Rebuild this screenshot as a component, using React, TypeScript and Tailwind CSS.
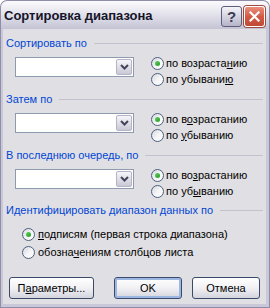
import React from "react";

const font = { fontFamily: '"Liberation Sans", Arial, sans-serif' };

function Radio({ checked }: { checked?: boolean }) {
  return (
    <span className="relative inline-flex w-[13px] h-[13px] shrink-0 rounded-full border border-[#4d5f80] bg-gradient-to-br from-[#d6d6de] via-[#f4f4f6] to-white items-center justify-center">
      {checked && (
        <span className="w-[5px] h-[5px] rounded-full bg-gradient-to-br from-[#5fd35f] to-[#1a9a1a]" />
      )}
    </span>
  );
}

function Combo() {
  return (
    <div className="w-[119px] h-[20px] border border-[#8e9aae] bg-white flex justify-end p-[1px]">
      <div className="w-[16px] h-full rounded-[2px] border border-[#b4b4c4] bg-gradient-to-b from-[#f6f6fa] to-[#c9c9d6] flex items-center justify-center">
        <svg width="9" height="6" viewBox="0 0 9 6">
          <polyline points="1,1 4.5,4.5 8,1" fill="none" stroke="#44445a" strokeWidth="2" />
        </svg>
      </div>
    </div>
  );
}

function Label({ text }: { text: string }) {
  return (
    <div className="flex items-center h-[13px] pl-[3px] pr-[3px]">
      <span className="text-[#0046d5] whitespace-nowrap">{text}</span>
      <div className="flex-1 ml-[7px] h-px bg-[#c3c2ce]" />
    </div>
  );
}

function SortGroup({
  label,
  up,
  down,
  mt,
}: {
  label: string;
  up: React.ReactNode;
  down: React.ReactNode;
  mt: string;
}) {
  return (
    <div className={mt}>
      <Label text={label} />
      <div className="flex mt-[5px] pl-[12px]">
        <div className="pt-[2px]">
          <Combo />
        </div>
        <div className="ml-[17px] flex flex-col">
          <div className="h-[16px] flex items-center gap-[2px]">
            <Radio checked />
            <span>{up}</span>
          </div>
          <div className="h-[16px] flex items-center gap-[2px]">
            <Radio />
            <span>{down}</span>
          </div>
        </div>
      </div>
    </div>
  );
}

function Btn({ children, def, cls }: { children: React.ReactNode; def?: boolean; cls: string }) {
  return (
    <div
      className={
        "h-[22px] rounded-[3px] border border-[#3b4a68] bg-gradient-to-b from-white via-[#f1f1f4] to-[#d4d4de] flex items-center justify-center " +
        cls +
        (def ? " shadow-[inset_0_0_0_2px_#9db7e4]" : "")
      }
    >
      {children}
    </div>
  );
}

export default function App() {
  return (
    <div style={font} className="w-[270px] h-[308px] text-[11px] text-black leading-[13px] flex flex-col">
      {/* title bar */}
      <div className="h-[29px] rounded-t-[7px] border border-b-0 border-[#8f8ea8] bg-gradient-to-b from-[#fbfbfd] via-[#e2e1ea] to-[#c4c3d4] flex items-center pl-[3px] pr-[4px]">
        <span className="font-bold text-[13px] text-[#15152a] flex-1">Сортировка диапазона</span>
        <div className="flex gap-[2px] mt-[2px]">
          <div className="w-[21px] h-[21px] rounded-[3px] border border-[#5d5d7c] bg-gradient-to-b from-[#f4f4f8] to-[#b5b4c9] flex items-center justify-center font-bold text-[15px] text-[#3a3a55]">
            ?
          </div>
          <div className="w-[21px] h-[21px] rounded-[3px] border border-white bg-gradient-to-b from-[#e8907c] via-[#d35a45] to-[#c04a35] flex items-center justify-center shadow-[0_0_0_1px_#a14a44]">
            <svg width="11" height="11" viewBox="0 0 11 11">
              <path d="M1.5 1.5 L9.5 9.5 M9.5 1.5 L1.5 9.5" stroke="white" strokeWidth="2.2" strokeLinecap="square" />
            </svg>
          </div>
        </div>
      </div>

      {/* body */}
      <div className="flex-1 border-x border-b border-[#8f8ea8] bg-[#c9c8d8] pl-[2px] pr-[3px] pb-[3px] flex">
        <div className="flex-1 bg-[#e0dfe3] pt-[8px] flex flex-col">
          <SortGroup
            mt=""
            label="Сортировать по"
            up={<>по возраста<u>н</u>ию</>}
            down={<>по убывани<u>ю</u></>}
          />
          <SortGroup
            mt="mt-[6px]"
            label="Затем по"
            up={<>по в<u>о</u>зрастанию</>}
            down={<>по <u>у</u>быванию</>}
          />
          <SortGroup
            mt="mt-[6px]"
            label="В последнюю очередь, по"
            up={<>по во<u>з</u>растанию</>}
            down={<>по уб<u>ы</u>ванию</>}
          />
          <div className="mt-[5px]">
            <Label text="Идентифицировать диапазон данных по" />
            <div className="mt-[8px] pl-[19px] flex flex-col">
              <div className="h-[18px] flex items-center gap-[3px]">
                <Radio checked />
                <span>
                  <u>п</u>одписям (первая строка диапазона)
                </span>
              </div>
              <div className="h-[18px] flex items-center gap-[3px]">
                <Radio />
                <span>
                  обозна<u>ч</u>ениям столбцов листа
                </span>
              </div>
            </div>
          </div>
          <div className="mt-[16px] flex pl-[6px]">
            <Btn cls="w-[85px]">
              П<u>а</u>раметры...
            </Btn>
            <Btn cls="w-[68px] ml-[20px]" def>
              OK
            </Btn>
            <Btn cls="w-[68px] ml-[10px]">Отмена</Btn>
          </div>
        </div>
      </div>
    </div>
  );
}
